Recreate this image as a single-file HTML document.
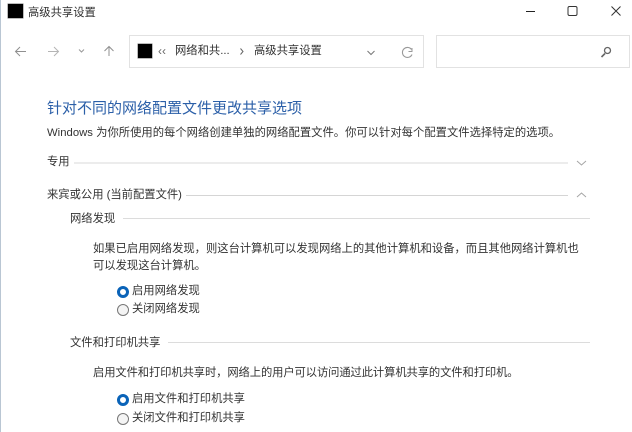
<!DOCTYPE html>
<html lang="zh-CN"><head><meta charset="utf-8">
<style>
html,body{margin:0;padding:0;background:#fff}
body{width:632px;height:432px;position:relative;overflow:hidden;font-family:"Liberation Sans","Noto Sans CJK SC",sans-serif;font-size:11.3px;color:#333}
.t{position:absolute;white-space:nowrap;line-height:16px;height:16px;background:#fff}
.l{position:absolute;height:1px;background:#dcdcdc}
.box{position:absolute;border:1px solid #e2e2e2;box-sizing:border-box;background:#fff}
.blk{position:absolute;background:#000;box-shadow:0 0 0 .5px #777}
svg{position:absolute;overflow:visible}
.r{position:absolute;width:12px;height:12px;border-radius:50%;box-sizing:border-box}
.on{border:3.5px solid #0a63b8;background:#fff}
.off{border:1px solid #777;background:#f4f4f4}
</style></head><body>
<div style="position:absolute;left:0;top:0;width:1px;height:432px;background:#b9c6d3"></div>
<div class="blk" style="left:8px;top:4px;width:15px;height:14px"></div>
<div class="t" style="left:28px;top:5px">高级共享设置</div>
<svg style="left:0;top:0" width="632" height="90" fill="none">
<path d="M526 11.500H535" stroke="#222" stroke-width="1"/>
<rect x="568" y="6.500" width="9" height="9" rx="1.500" stroke="#333" stroke-width="1"/>
<path d="M611.500 6.500L620.500 15.500M620.500 6.500L611.500 15.500" stroke="#333" stroke-width="1"/>
<path d="M26 51.500H16M20 47L15.500 51.500L20 56" stroke="#909090" stroke-width="1"/>
<path d="M48 51.500H58M54 47L58.500 51.500L54 56" stroke="#b5b5b5" stroke-width="1"/>
<path d="M79 49.500L81.500 52L84 49.500" stroke="#999" stroke-width="1"/>
<path d="M109 56V47M104.500 51L109 46.500L113.500 51" stroke="#909090" stroke-width="1"/>
</svg>
<div class="box" style="left:129px;top:35px;width:295px;height:33px"></div>
<div class="blk" style="left:138px;top:44px;width:14px;height:14px"></div>
<div class="t" style="left:158px;top:43px;color:#666;font-size:12px">‹‹</div>
<div class="t" style="left:175px;top:43px">网络和共...</div>
<svg style="left:0;top:0" width="632" height="90" fill="none">
<path d="M240.500 48.500L243 51.500L240.500 54.500" stroke="#666" stroke-width="1"/>
<path d="M367.500 51L371 54.500L374.500 51" stroke="#777" stroke-width="1"/>
<path d="M411.500 49.500A5 5 0 1 0 412 54.500" stroke="#999" stroke-width="1.100"/>
<path d="M412 48V51.500H408.500" stroke="#999" stroke-width="1"/>
</svg>
<div class="t" style="left:254px;top:43px">高级共享设置</div>
<div class="box" style="left:436px;top:35px;width:194px;height:33px"></div>
<svg style="left:0;top:0" width="632" height="90" fill="none">
<circle cx="607.500" cy="50.500" r="3" stroke="#666" stroke-width="1.300"/>
<path d="M605 53.500L601.500 57" stroke="#666" stroke-width="1.600"/>
</svg>

<div class="t" style="left:47px;top:101px;font-size:15px;color:#2b5fa8">针对不同的网络配置文件更改共享选项</div>
<div class="t" style="left:47px;top:125px;letter-spacing:.02px">Windows 为你所使用的每个网络创建单独的网络配置文件。你可以针对每个配置文件选择特定的选项。</div>

<div class="l" style="left:74px;top:162px;width:494px;height:2px;background:#ececec"></div>
<div class="t" style="left:47px;top:154px">专用</div>
<svg style="left:0;top:0" width="632" height="432" fill="none">
<path d="M577 161L581.500 165L586 161" stroke="#a5a5a5" stroke-width="1"/>
<path d="M577 197L581.500 193L586 197" stroke="#a5a5a5" stroke-width="1"/>
</svg>

<div class="l" style="left:186px;top:195px;width:382px;background:#d5d5d5"></div>
<div class="t" style="left:47px;top:187px">来宾或公用 (当前配置文件)</div>

<div class="l" style="left:123px;top:218px;width:467px"></div>
<div class="t" style="left:70px;top:211px">网络发现</div>
<div class="t" style="left:93px;top:241px">如果已启用网络发现，则这台计算机可以发现网络上的其他计算机和设备，而且其他网络计算机也</div>
<div class="t" style="left:93px;top:258px">可以发现这台计算机。</div>
<div class="r on" style="left:117px;top:286px"></div>
<div class="t" style="left:132px;top:283px">启用网络发现</div>
<div class="r off" style="left:117px;top:304px"></div>
<div class="t" style="left:132px;top:301px">关闭网络发现</div>

<div class="l" style="left:168px;top:342px;width:422px"></div>
<div class="t" style="left:70px;top:335px">文件和打印机共享</div>
<div class="t" style="left:93px;top:365px;letter-spacing:-.1px">启用文件和打印机共享时，网络上的用户可以访问通过此计算机共享的文件和打印机。</div>
<div class="r on" style="left:117px;top:394px"></div>
<div class="t" style="left:132px;top:391px">启用文件和打印机共享</div>
<div class="r off" style="left:117px;top:413px"></div>
<div class="t" style="left:132px;top:410px">关闭文件和打印机共享</div>
</body></html>
